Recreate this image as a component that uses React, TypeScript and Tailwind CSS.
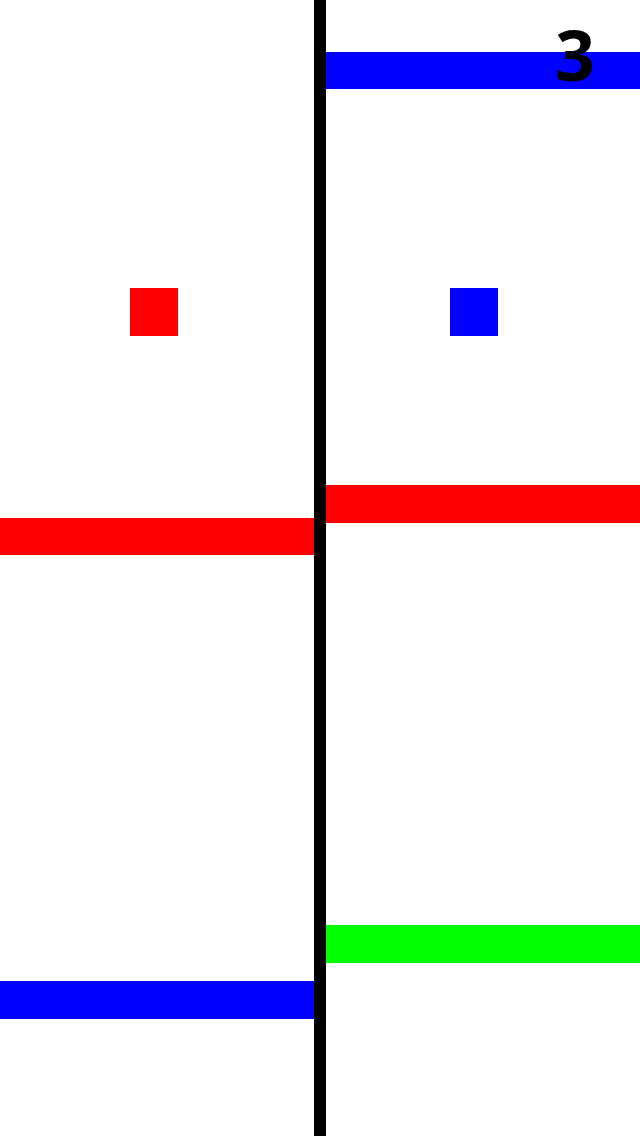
import React from 'react';

type Block = { top: number; height: number; color: string };

const leftBars: Block[] = [
  { top: 518, height: 37, color: 'bg-[#ff0000]' },
  { top: 981, height: 38, color: 'bg-[#0000ff]' },
];

const rightBars: Block[] = [
  { top: 52, height: 37, color: 'bg-[#0000ff]' },
  { top: 485, height: 38, color: 'bg-[#ff0000]' },
  { top: 925, height: 38, color: 'bg-[#00ff00]' },
];

function Lane({ bars, player }: { bars: Block[]; player: React.ReactNode }) {
  return (
    <div className="relative h-full flex-1">
      {bars.map((b, i) => (
        <div
          key={i}
          className={`absolute left-0 right-0 ${b.color}`}
          style={{ top: b.top, height: b.height }}
        />
      ))}
      {player}
    </div>
  );
}

export default function App() {
  return (
    <div className="relative flex h-[1136px] w-[640px] overflow-hidden bg-white">
      <Lane
        bars={leftBars}
        player={<div className="absolute left-[130px] top-[288px] h-12 w-12 bg-[#ff0000]" />}
      />
      <div className="h-full w-[12px] bg-black" />
      <Lane
        bars={rightBars}
        player={<div className="absolute left-[124px] top-[288px] h-12 w-12 bg-[#0000ff]" />}
      />
      <div
        className="absolute right-[45px] top-[19px] text-[70px] font-bold leading-none text-black"
        style={{ fontFamily: '"Open Sans", "Liberation Sans", sans-serif' }}
      >
        3
      </div>
    </div>
  );
}
